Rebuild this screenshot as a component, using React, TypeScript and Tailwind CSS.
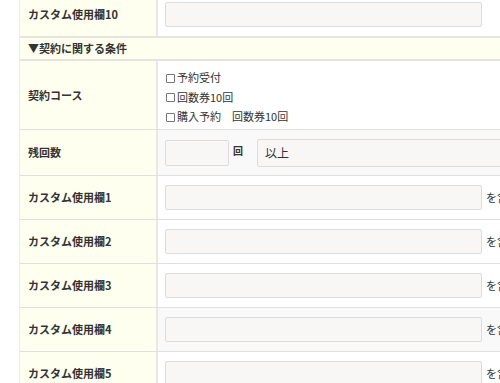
import React from "react";

const font = { fontFamily: '"Noto Sans CJK JP", "Noto Sans", sans-serif' };

function Label({ children }: { children: React.ReactNode }) {
  return (
    <div className="w-[138px] shrink-0 bg-[#fffff0] border-r-2 border-[#e9e9e2] flex items-center pl-[8px] text-[11px] font-bold text-[#333]">
      {children}
    </div>
  );
}

function Input({ w = "w-[317px]" }: { w?: string }) {
  return <div className={`${w} h-[25px] bg-[#f8f7f5] border border-[#dcdcdc] rounded-[2px]`} />;
}

function CustomRow({ label, gray }: { label: string; gray?: boolean }) {
  return (
    <div className="flex h-[44px] border-b border-[#e0e0e0]">
      <Label>{label}</Label>
      <div className={`flex-1 flex items-center pl-[7px] ${gray ? "bg-[#f9f9f9]" : "bg-white"}`}>
        <Input />
        <span className="ml-[4px] text-[11px] text-[#333] whitespace-nowrap">を含む</span>
      </div>
    </div>
  );
}

function Check({ text }: { text: string }) {
  return (
    <div className="flex items-center h-[19.5px] text-[11px] text-[#333] whitespace-nowrap">
      <span className="inline-block w-[9px] h-[9px] border border-[#777] rounded-[1px] mr-[2px] mt-[1px]" />
      {text}
    </div>
  );
}

export default function App() {
  return (
    <div className="w-[500px] h-[383px] overflow-hidden bg-white" style={font}>
      <div className="ml-[19px] w-[620px] -mt-[7px] border-l border-[#ececec]">
        <div className="flex h-[45px] border-b-2 border-[#e4e4e0]">
          <Label>カスタム使用欄10</Label>
          <div className="flex-1 flex items-center pl-[7px] bg-white">
            <Input />
          </div>
        </div>
        <div className="h-[23px] bg-[#fffff0] border-b-2 border-[#e4e4e0] flex items-center pl-[8px] text-[11px] font-bold text-[#333]">
          ▼契約に関する条件
        </div>
        <div className="flex h-[69px] border-b border-[#e0e0e0]">
          <Label>契約コース</Label>
          <div className="flex-1 flex flex-col justify-center pl-[8px] bg-white pt-[4px]">
            <Check text="予約受付" />
            <Check text="回数券10回" />
            <Check text="購入予約　回数券10回" />
          </div>
        </div>
        <div className="flex h-[46px] border-b border-[#e0e0e0]">
          <Label>残回数</Label>
          <div className="flex-1 flex items-center pl-[7px] bg-[#f9f9f9]">
            <div className="w-[64px] h-[26px] bg-[#f8f7f5] border border-[#dcdcdc] rounded-[2px]" />
            <span className="ml-[4px] text-[10px] font-bold text-[#333] -mt-[4px]">回</span>
            <div className="ml-[14px] w-[300px] h-[28px] bg-[#f8f7f5] border border-[#dcdcdc] rounded-[2px] flex items-center pl-[7px] text-[12px] text-[#333]">
              以上
            </div>
          </div>
        </div>
        <CustomRow label="カスタム使用欄1" />
        <CustomRow label="カスタム使用欄2" />
        <CustomRow label="カスタム使用欄3" />
        <CustomRow label="カスタム使用欄4" gray />
        <CustomRow label="カスタム使用欄5" />
      </div>
    </div>
  );
}
